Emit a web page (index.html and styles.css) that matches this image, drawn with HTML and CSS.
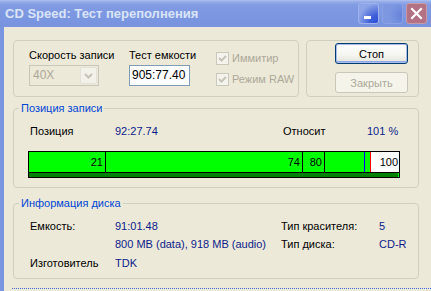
FILE: index.html
```html
<!DOCTYPE html>
<html lang="ru">
<head>
<meta charset="utf-8">
<title>CD Speed: Тест переполнения</title>
<link rel="stylesheet" href="styles.css">
</head>
<body>
<div class="window">
  <div class="titlebar">
    <span class="title">CD Speed: Тест переполнения</span>
    <div class="tbtns">
      <span class="tb tb-min"><span class="dash"></span></span>
      <span class="tb tb-max"></span>
      <span class="tb tb-close">
        <svg width="13" height="13" viewBox="0 0 13 13"><path d="M2 2 L11 11 M11 2 L2 11" stroke="#fff" stroke-width="2.2" stroke-linecap="square"/></svg>
      </span>
    </div>
  </div>
  <div class="client">
    <div class="toprow">
      <div class="box box-settings">
        <div class="col col-speed">
          <span class="lbl">Скорость записи</span>
          <div class="combo">
            <span class="combo-val">40X</span>
            <span class="combo-btn"><svg width="9" height="6" viewBox="0 0 9 6"><path d="M1 1 L4.5 4.5 L8 1" fill="none" stroke="#C4C2B6" stroke-width="2"/></svg></span>
          </div>
        </div>
        <div class="col col-test">
          <span class="lbl">Тест емкости</span>
          <div class="edit">905:77.40</div>
        </div>
        <div class="col col-checks">
          <div class="chk">
            <span class="chkbox"><svg width="11" height="11" viewBox="0 0 11 11"><path d="M2 5 L4.5 7.5 L9 3" fill="none" stroke="#C6C4B8" stroke-width="2"/></svg></span>
            <span class="chk-label">Иммитир</span>
          </div>
          <div class="chk">
            <span class="chkbox"><svg width="11" height="11" viewBox="0 0 11 11"><path d="M2 5 L4.5 7.5 L9 3" fill="none" stroke="#C6C4B8" stroke-width="2"/></svg></span>
            <span class="chk-label">Режим RAW</span>
          </div>
        </div>
      </div>
      <div class="box box-buttons">
        <button class="btn btn-default">Стоп</button>
        <button class="btn btn-disabled">Закрыть</button>
      </div>
    </div>

    <fieldset class="group group-pos">
      <legend>Позиция записи</legend>
      <div class="pos-row">
        <span>Позиция</span>
        <span class="val">92:27.74</span>
        <span>Относит</span>
        <span class="val">101 %</span>
      </div>
      <div class="bar">
        <div class="segs">
          <span class="seg" style="width:77px">21</span>
          <span class="seg" style="width:197px">74</span>
          <span class="seg" style="width:22px">80</span>
          <span class="seg seg-blue" style="width:40px"></span>
          <span class="seg seg-red" style="width:6px"></span>
          <span class="seg seg-rest">100</span>
        </div>
        <div class="track"></div>
      </div>
    </fieldset>

    <fieldset class="group group-info">
      <legend>Информация диска</legend>
      <div class="info">
        <span>Емкость:</span>
        <span class="val">91:01.48</span>
        <span>Тип красителя:</span>
        <span class="val">5</span>
        <span></span>
        <span class="val">800 MB (data), 918 MB (audio)</span>
        <span>Тип диска:</span>
        <span class="val">CD-R</span>
        <span>Изготовитель</span>
        <span class="val">TDK</span>
      </div>
    </fieldset>

    <div class="status"></div>
  </div>
</div>
</body>
</html>
```
FILE: styles.css
```css
* { box-sizing: border-box; }
html, body { margin: 0; padding: 0; }
body {
  width: 431px;
  height: 291px;
  overflow: hidden;
  background: #ECE9D8;
  font-family: "Liberation Sans", Arial, sans-serif;
  font-size: 11px;
  color: #000;
}
.window { width: 431px; height: 291px; display: flex; flex-direction: column; }

.titlebar {
  height: 27px;
  flex: none;
  display: flex;
  justify-content: space-between;
  align-items: flex-start;
  padding: 0 4px 0 5px;
  background: linear-gradient(#AEC0EE 0, #93AAE8 2px, #809BE2 5px, #7B96E0 20px, #7892DD 27px);
}
.title {
  font-weight: bold;
  font-size: 13px;
  line-height: 28px;
  color: #DAE4F8;
}
.tbtns { display: flex; gap: 3px; margin-top: 3px; }
.tb {
  width: 21px;
  height: 21px;
  border-radius: 3px;
  display: flex;
  align-items: center;
  justify-content: center;
}
.tb-min {
  border: 1px solid #9DB2EC;
  background:
    radial-gradient(circle at 100% 100%, #2D4FD6 0, #3E5FD9 30%, rgba(90,120,222,0) 75%),
    #8EA6E7;
  align-items: flex-end;
  justify-content: flex-start;
  padding: 0 0 4px 5px;
}
.dash { width: 7px; height: 3px; background: #fff; }
.tb-max {
  border: 1px solid #8AA2E5;
  background: radial-gradient(circle at 100% 60%, #6682DA 0, rgba(123,150,224,0) 60%), #7D98E1;
}
.tb-close {
  border: 1px solid #C79AA6;
  background: #B27283;
}

.client {
  flex: 1;
  border-left: 4px solid #7B96E0;
  padding: 13px 0 0 9px;
}

.toprow { display: flex; gap: 7px; height: 57px; }
.box { border: 1px solid #D0D0BF; border-radius: 4px; }
.box-settings { width: 286px; display: flex; padding: 8px 0 0 15px; }
.col-speed { width: 100px; }
.col-test { width: 87px; }
.col-checks { padding-top: 3px; }
.lbl { display: block; height: 13px; line-height: 13px; white-space: nowrap; }

.combo {
  margin-top: 3px;
  width: 70px;
  height: 21px;
  border: 1px solid #C9C7BA;
  display: flex;
  background: #ECE9D8;
}
.combo-val { flex: 1; color: #ACA899; padding-left: 3px; line-height: 19px; font-size: 12px; }
.combo-btn {
  width: 17px;
  margin: 1px;
  border: 1px solid #E4E2D6;
  border-radius: 2px;
  background: #F3F2EA;
  display: flex;
  align-items: center;
  justify-content: center;
}
.edit {
  margin-top: 3px;
  width: 61px;
  height: 21px;
  border: 1px solid #7F9DB9;
  background: #fff;
  padding-left: 2px;
  line-height: 19px;
  font-size: 12px;
}

.chk { display: flex; align-items: center; height: 13px; color: #ACA899; }
.chk + .chk { margin-top: 8px; }
.chkbox {
  width: 13px;
  height: 13px;
  border: 1px solid #CAC8BB;
  background: #F4F3EE;
  display: flex;
  align-items: center;
  justify-content: center;
  margin-right: 3px;
}
.chk-label { line-height: 13px; white-space: nowrap; }

.box-buttons {
  width: 113px;
  display: flex;
  flex-direction: column;
  gap: 8px;
  padding: 2px 0 0 28px;
}
.btn {
  width: 73px;
  height: 21px;
  padding: 0;
  font-family: "Liberation Sans", Arial, sans-serif;
  font-size: 11px;
  border-radius: 3px;
}
.btn-default {
  border: 1px solid #003C74;
  color: #000;
  background: linear-gradient(#FFFFFF, #F4F4F0 60%, #E3E1D9);
  box-shadow: inset 0 0 0 1px #A9BDEB, inset 0 -1px 0 1px #8DA9E6;
}
.btn-disabled {
  border: 1px solid #C9C7BA;
  color: #ACA899;
  background: #F5F4EA;
}

.group {
  margin: 5px 0 0 0;
  padding: 0 0 9px 0;
  width: 406px;
  min-width: 0;
  border: 1px solid #D0D0BF;
  border-radius: 4px;
}
.group legend {
  margin-left: 5px;
  padding: 0 2px;
  line-height: 13px;
  color: #0046D5;
}
.group-info { margin-top: 9px; padding-bottom: 8px; }

.val { color: #0C1C8C; white-space: nowrap; }

.pos-row {
  display: grid;
  grid-template-columns: 85px 168px 84px auto;
  margin: 10px 0 0 16px;
  height: 13px;
  line-height: 13px;
  white-space: nowrap;
}

.bar {
  margin: 13px 0 0 14px;
  width: 372px;
  border: 1px solid #000;
  background: #00FF00;
}
.segs { display: flex; height: 21px; border-bottom: 1px solid #000; }
.seg {
  flex: none;
  height: 20px;
  line-height: 20px;
  text-align: right;
  padding-right: 2px;
  border-right: 1px solid #000;
  background: #00FF00;
}
.seg-blue { border-right-color: #0000FF; }
.seg-red { border-right-color: #FF0000; }
.seg-rest { flex: 1; border-right: none; background: #FFFFFF; padding-right: 1px; }
.track { height: 4px; background: #008000; margin-right: 1px; }

.info {
  display: grid;
  grid-template-columns: 85px 166px 98px auto;
  grid-template-rows: 18px 19px 13px;
  margin: 10px 0 0 16px;
  line-height: 13px;
  white-space: nowrap;
}

.status {
  margin: 9px 0 0 -1px;
  border-top: 1px dotted #3F66E0;
}
```
